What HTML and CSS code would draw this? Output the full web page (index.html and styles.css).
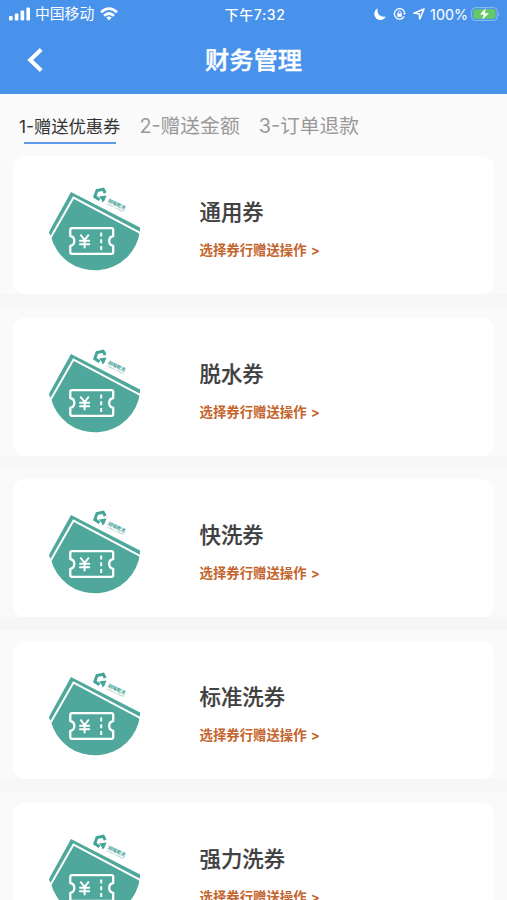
FILE: index.html
```html
<!DOCTYPE html>
<html lang="zh-CN">
<head>
    <meta charset="UTF-8">
    <meta name="viewport" content="width=device-width, initial-scale=1.0">
    <title>财务管理</title>
    <link rel="stylesheet" href="styles.css">
</head>
<body>

<!-- Coupon picture, shared by all cards -->
<svg class="sprite" width="0" height="0">
    <symbol id="coupon" viewBox="0 0 100 95">
        <path fill="#4fa89b" d="M26 12 L95 47.5 V50 A45.3 44.5 0 0 1 5.8 56 L4 53 Q4 52 5 50 Z"/>
        <path fill="none" stroke="#fff" stroke-width="2" d="M4.5 59.5 L28.5 17.6 L96 53.3"/>
        <g fill="none" stroke="#fff" stroke-width="2.3" stroke-linejoin="round" stroke-linecap="round">
            <path d="M27 48.2 H66.5 Q68.2 48.2 68.2 50 V56 A5 5 0 0 0 68.2 65.8 V72 Q68.2 73.8 66.5 73.8 H27 Q25.3 73.8 25.3 72 V65.8 A5 5 0 0 0 25.3 56 V50 Q25.3 48.2 27 48.2 Z"/>
            <path d="M35.8 55.2 L39.6 60 L43.4 55.2 M39.6 60 V67.5 M35 60.8 H44.2 M35 64.3 H44.2" stroke-width="2"/>
            <path d="M56.2 52.5 V70.5" stroke-width="2" stroke-linecap="butt" stroke-dasharray="4 2.8"/>
        </g>
        <path fill="none" stroke="#43a497" stroke-width="3" d="M60.2 13 L58.2 9.2 L52 10.6 L49.8 16.6 L54.5 19.8"/>
        <path fill="#43a497" d="M54 16.5 L61.5 15.5 L59.5 20.5 L57.5 22.5 L56.5 19.5 Z"/>
        <g transform="translate(62.6 21.8) rotate(25)" fill="#43a497">
            <text class="logo-name" x="0" y="0">胡喵乾洗</text>
            <text class="logo-sub" x="0" y="2.9">HUMIAO LAUNDRY</text>
        </g>
    </symbol>
</svg>

<div class="header">
    <div class="status-bar">
        <div class="status-left">
            <svg width="22" height="14" viewBox="0 0 22 14" fill="#fff">
                <rect x="0" y="9" width="3.6" height="4.5" rx="1"/>
                <rect x="5.8" y="6.5" width="3.6" height="7" rx="1"/>
                <rect x="11.6" y="3.5" width="3.6" height="10" rx="1"/>
                <rect x="17.4" y="0.5" width="3.6" height="13" rx="1"/>
            </svg>
            <span class="carrier">中国移动</span>
            <svg width="18" height="14" viewBox="0 0 18 14" fill="none" stroke="#fff" stroke-width="2.7">
                <path d="M1 5.2 Q9 -2 17 5.2"/>
                <path d="M4 8.8 Q9 4.2 14 8.8"/>
                <path d="M6.3 10.6 Q9 8.2 11.7 10.6 L9 13.4 Z" fill="#fff" stroke="none"/>
            </svg>
        </div>
        <div class="status-time">下午7:32</div>
        <div class="status-right">
            <svg width="12" height="12" viewBox="0 0 12 12">
                <path fill="#fff" d="M3.8 0.2 A6.2 6.2 0 1 0 12 8.6 Q7.6 9.6 5 6.8 Q2.7 4 3.8 0.2 Z"/>
            </svg>
            <svg width="13" height="12" viewBox="0 0 13 12" fill="none" stroke="#fff" stroke-width="1.3">
                <path d="M11.5 4.2 A5.2 5.2 0 1 0 11.2 8.3"/>
                <path d="M9.9 4.7 H13 L11.5 7 Z" fill="#fff" stroke="none"/>
                <rect x="4.2" y="5.4" width="4.6" height="3.4" fill="#fff" stroke="none"/>
                <path d="M5.1 5.8 V4.6 A1.4 1.4 0 0 1 7.9 4.6 V5.8" stroke-width="0.9"/>
            </svg>
            <svg width="12" height="12" viewBox="0 0 12 12" fill="none" stroke="#fff" stroke-width="1.6" stroke-linejoin="round">
                <path d="M11 1 L1 5.2 L6.2 5.8 L6.8 11 Z"/>
            </svg>
            <span class="percent">100%</span>
            <svg width="30" height="14" viewBox="0 0 30 14">
                <rect x="0.6" y="0.6" width="25.6" height="12.8" rx="3.6" fill="none" stroke="#8dbdee" stroke-width="1"/>
                <rect x="2.3" y="2.2" width="22.2" height="9.6" rx="2" fill="#66ca64"/>
                <path d="M27.4 4.6 Q29.4 7 27.4 9.4 Z" fill="#8dbdee"/>
                <path d="M14.8 1.2 L8.8 7.6 H12.6 L11.3 12.8 L17.8 6.2 H13.8 Z" fill="#fff"/>
            </svg>
        </div>
    </div>
    <div class="nav-bar">
        <svg class="back" width="17" height="26" viewBox="0 0 17 26">
            <path d="M15.2 2.5 L4.2 13 L15.2 23.5" fill="none" stroke="#fff" stroke-width="4"/>
        </svg>
        <h1>财务管理</h1>
    </div>
</div>

<div class="tabs">
    <div class="tab active">1-赠送优惠券</div>
    <div class="tab">2-赠送金额</div>
    <div class="tab">3-订单退款</div>
</div>

<div class="list">
    <div class="item">
        <div class="card">
            <svg class="picture"><use href="#coupon"/></svg>
            <div class="info">
                <div class="name">通用券</div>
                <div class="action">选择券行赠送操作 &gt;</div>
            </div>
        </div>
    </div>
    <div class="item">
        <div class="card">
            <svg class="picture"><use href="#coupon"/></svg>
            <div class="info">
                <div class="name">脱水券</div>
                <div class="action">选择券行赠送操作 &gt;</div>
            </div>
        </div>
    </div>
    <div class="item">
        <div class="card">
            <svg class="picture"><use href="#coupon"/></svg>
            <div class="info">
                <div class="name">快洗券</div>
                <div class="action">选择券行赠送操作 &gt;</div>
            </div>
        </div>
    </div>
    <div class="item">
        <div class="card">
            <svg class="picture"><use href="#coupon"/></svg>
            <div class="info">
                <div class="name">标准洗券</div>
                <div class="action">选择券行赠送操作 &gt;</div>
            </div>
        </div>
    </div>
    <div class="item">
        <div class="card">
            <svg class="picture"><use href="#coupon"/></svg>
            <div class="info">
                <div class="name">强力洗券</div>
                <div class="action">选择券行赠送操作 &gt;</div>
            </div>
        </div>
    </div>
</div>

</body>
</html>
```
FILE: styles.css
```css
body {
    margin: 0;
    height: 900px;
    overflow: hidden;
    background-color: #fafafa;
    font-family: Inter, "Noto Sans CJK SC", sans-serif;
}

svg {
    display: block;
    flex-shrink: 0;
}

.sprite {
    position: absolute;
}

.header {
    height: 93.5px;
    background-color: #4992eb;
    color: #fff;
}

.status-bar {
    display: grid;
    grid-template-columns: 1fr auto 1fr;
    align-items: center;
    height: 27px;
    padding: 0 6px 0 9px;
    font-size: 14px;
    line-height: 27px;
}

.status-left,
.status-right {
    display: flex;
    align-items: center;
}

.carrier {
    margin: 1px 6px 0 4px;
    font-size: 14.8px;
}

.status-time {
    font-weight: 500;
    letter-spacing: 0.6px;
}

.status-right {
    justify-content: flex-end;
    gap: 7px;
}

.percent {
    margin: 0 -4px 0 -2px;
    font-size: 14.3px;
}

.nav-bar {
    display: grid;
    grid-template-columns: 1fr auto 1fr;
    align-items: center;
    height: 65px;
}

.back {
    margin-left: 26px;
}

h1 {
    margin: 0;
    font-size: 24.3px;
    line-height: 36px;
    font-weight: 500;
    -webkit-text-stroke: 0.4px #fff;
}

.tabs {
    display: flex;
    height: 62.5px;
    padding-left: 19px;
    box-sizing: border-box;
    gap: 19px;
}

.tab {
    height: 50px;
    line-height: 65px;
    font-size: 19.8px;
    color: #999;
    white-space: nowrap;
}

.tab.active {
    position: relative;
    font-size: 17.3px;
    color: #333;
}

.tab.active::after {
    content: "";
    position: absolute;
    left: 5px;
    right: 4px;
    bottom: 0;
    height: 2px;
    background-color: #5b9bea;
}

.item {
    padding: 0 13px;
}

.item + .item {
    padding-top: 10.7px;
    border-top: 13px solid #f6f6f6;
}

.card {
    display: flex;
    height: 138px;
    background-color: #fff;
    border-radius: 12px;
}

.picture {
    width: 100px;
    height: 95px;
    margin: 24px 0 0 32px;
}

.info {
    margin-left: 54.5px;
    padding-top: 40px;
}

.name {
    font-size: 21.4px;
    line-height: 32px;
    font-weight: 500;
    color: #404040;
    -webkit-text-stroke: 0.2px #404040;
}

.action {
    margin-top: 12px;
    font-size: 13.4px;
    line-height: 20px;
    font-weight: 700;
    color: #c4642c;
    word-spacing: 1px;
}

.logo-name {
    font-size: 4.7px;
    font-weight: 700;
}

.logo-sub {
    font-size: 2.1px;
}
```
